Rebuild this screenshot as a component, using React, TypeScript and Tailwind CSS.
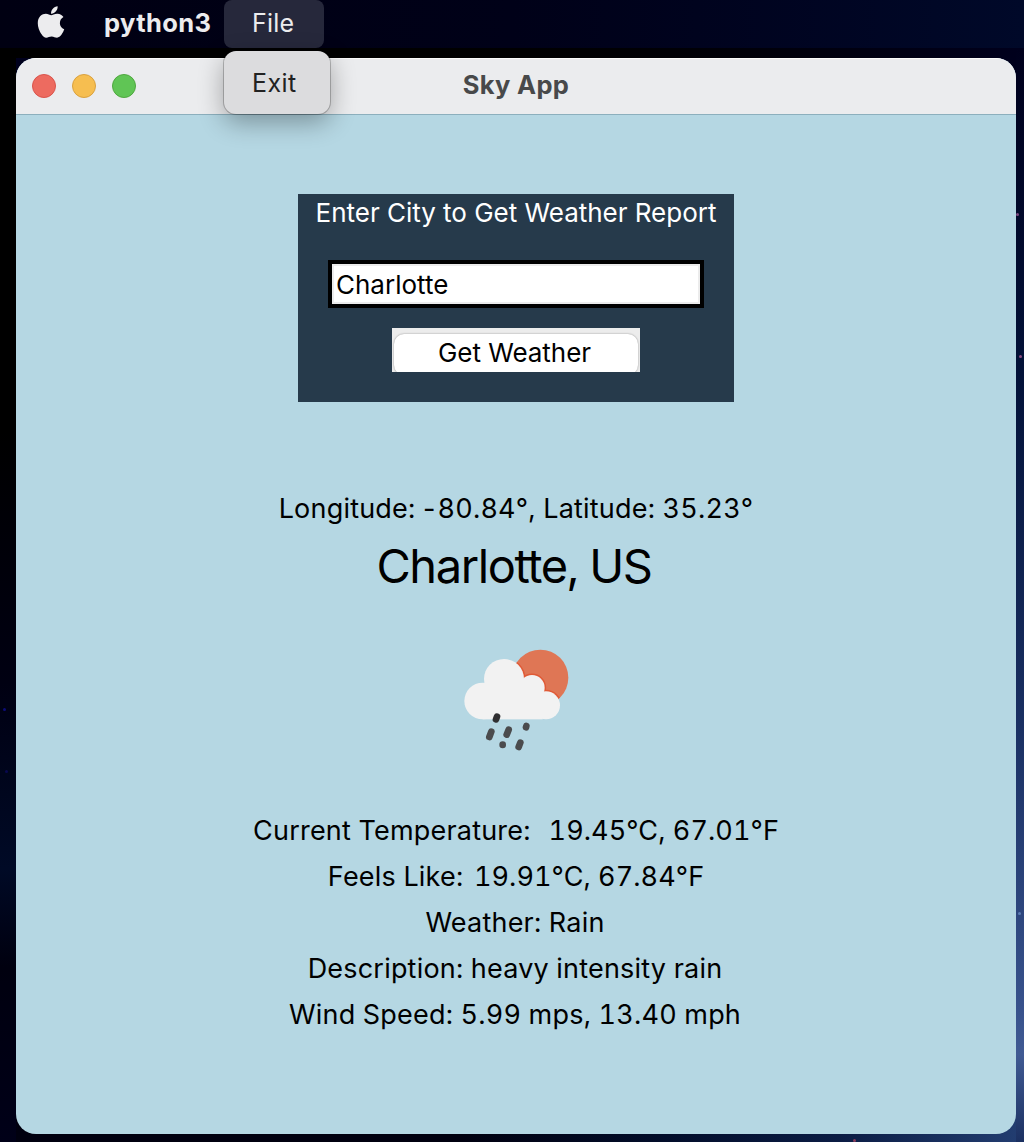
import { FaApple } from "react-icons/fa";

function MenuBar() {
  return (
    <header className="flex h-12 items-center bg-linear-to-r from-[#000012] via-[#000118] to-[#000929] text-[25px] text-[#ececee]">
      <FaApple className="-mt-1 ml-[33px] size-9" />
      <span className="ml-[35px] w-[120px] pb-px text-[25.5px] font-bold tracking-[0.4px]">python3</span>
      <div className="relative h-12 w-[100px] rounded-lg bg-[#26283b] px-7 leading-[46px] tracking-[0.2px]">
        File
        <div className="absolute top-[51px] left-0 z-10 h-[63px] w-[106px] rounded-xl bg-[#dcdcde] px-7 pt-px leading-[63px] tracking-[0.4px] text-[#222] shadow-[0_0_0_1px_rgba(0,0,0,0.22),0_8px_26px_rgba(0,0,0,0.33)]">
          Exit
        </div>
      </div>
    </header>
  );
}

function TitleBar() {
  return (
    <div className="grid h-14 grid-cols-[1fr_auto_1fr] items-center bg-[#ebecee] px-4 shadow-[inset_0_1px_0_#fafafa]">
      <div className="flex gap-4">
        <span className="size-6 rounded-full border border-[#d9544c] bg-[#ed6b60]" />
        <span className="size-6 rounded-full border border-[#d9a13f] bg-[#f6be50]" />
        <span className="size-6 rounded-full border border-[#4fa73f] bg-[#60c555]" />
      </div>
      <h1 className="pb-0.5 text-[25.5px] font-bold tracking-[0.3px] text-[#48494a]">Sky App</h1>
    </div>
  );
}

function SearchPanel() {
  return (
    <div className="flex h-[208px] w-[436px] flex-col items-center bg-[#263a4b]">
      <p className="h-[66px] text-[26px] leading-[37px] tracking-[-0.02px] text-white">
        Enter City to Get Weather Report
      </p>
      <div className="h-12 w-[376px] border-4 border-black">
        <input
          defaultValue="Charlotte"
          className="block h-10 w-full border-2 border-[#ececec] bg-white pl-0.5 text-[26px] leading-9 text-black outline-none"
        />
      </div>
      <div className="mt-5 h-11 w-[248px] overflow-hidden bg-[#ececec] px-0.5 pt-1.5">
        <button className="block h-[41px] w-full rounded-[10px] bg-white pr-[3px] pb-1 text-[26px] leading-[37px] tracking-[-0.04px] text-black shadow-[0_0_2px_rgba(0,0,0,0.4)]">
          Get Weather
        </button>
      </div>
    </div>
  );
}

function RainIcon() {
  return (
    <svg viewBox="0 0 390 360" className="h-[120px] w-[130px]">
      <defs>
        <clipPath id="sun">
          <circle cx="271" cy="113" r="84" />
        </clipPath>
        <g id="cloud">
          <circle cx="162" cy="117" r="60" />
          <circle cx="98" cy="183" r="55" />
          <circle cx="246" cy="143" r="38" />
          <circle cx="288" cy="196" r="42" />
          <rect x="98" y="140" width="180" height="98" />
        </g>
      </defs>
      <circle cx="271" cy="113" r="84" fill="#df7655" />
      <g clipPath="url(#sun)">
        <use href="#cloud" stroke="#e05a36" strokeWidth="9" strokeLinejoin="round" />
      </g>
      <use href="#cloud" fill="#f2f2f2" />
      <g stroke="#4b4b4d" strokeWidth="20" strokeLinecap="round">
        <path d="M141 230l-3 8" stroke="#2f2f31" />
        <path d="M124 275l-6 16M176 269l-6 15M229 258l-1 4M158 314v1M211 308l-5 13" />
      </g>
    </svg>
  );
}

const readings = [
  ["Current Temperature:  ", "19.45°C, 67.01°F"],
  ["Feels Like: ", "19.91°C, 67.84°F"],
];

const conditions = [
  "Weather: Rain",
  "Description: heavy intensity rain",
  "Wind Speed: 5.99 mps, 13.40 mph",
];

function Report() {
  return (
    <section className="mr-0.5 flex flex-col items-center text-[27px] tracking-[0.2px] whitespace-pre text-black tabular-nums">
      <p className="flex h-[46px] pl-0.5 leading-[46px]">
        <span>Longitude: </span>
        <span className="mr-0.5 proportional-nums">-</span>
        <span>80.84°, </span>
        <span>Latitude: 35.23°</span>
      </p>
      <h2 className="h-[68px] pr-0.5 text-[47px] leading-[67px] tracking-[-1.4px]">Charlotte, US</h2>
      <div className="mt-10 mb-12">
        <RainIcon />
      </div>
      {readings.map(([label, value]) => (
        <p key={label} className="h-[46px] pl-0.5 leading-[46px]">
          {label}
          <span className="ml-[3px] tracking-[0.08px]">{value}</span>
        </p>
      ))}
      {conditions.map((text) => (
        <p key={text} className="h-[46px] leading-[46px]">
          {text}
        </p>
      ))}
    </section>
  );
}

function Star({ className }: { className: string }) {
  return <span className={`absolute size-[3px] rounded-full blur-[0.5px] ${className}`} />;
}

export default function App() {
  return (
    <main className="relative h-[1142px] w-[1024px] overflow-hidden bg-[#00000f] font-[Inter,sans-serif]">
      <MenuBar />
      <div className="flex h-[1094px] bg-[linear-gradient(to_right,#00000f_45%,#020d2a_65%,#0b1c44_82%,#233e72)]">
        <div className="w-4 shrink-0 bg-[linear-gradient(to_bottom,#000_35%,#000012_58%,#000a26_75%,#00000f_84%,#000018)]" />
        <div className="w-[1000px] shrink-0">
          <div className="h-2.5 bg-linear-to-r from-black from-30% to-[#00001c]" />
          <div className="h-[1076px] bg-[linear-gradient(to_right,#00000f_50%,transparent_50%)]">
            <div className="h-full bg-[linear-gradient(to_bottom,#00001c_50%,transparent_50%)]">
              <div className="h-full overflow-hidden rounded-[20px] bg-[#b5d7e3]">
                <TitleBar />
                <div className="flex h-[1020px] flex-col items-center border-t border-[#8cafbd] pt-[79px]">
                  <SearchPanel />
                  <div className="mt-21">
                    <Report />
                  </div>
                </div>
              </div>
            </div>
          </div>
        </div>
        <div className="w-2 shrink-0 bg-[linear-gradient(to_bottom,#00001c,#031239_30%,#1a3063_62%,#38528c_88%,#405a93_92%,#1b3061)]" />
      </div>
      <Star className="top-[213px] left-[1016px] bg-[#7d4a80]" />
      <Star className="top-[355px] left-[1019px] bg-[#8a4c80]" />
      <Star className="top-[912px] left-[1018px] bg-[#5d7db5]" />
      <Star className="top-[708px] left-[3px] bg-[#0c0c78]" />
      <Star className="top-[770px] left-[5px] bg-[#080850]" />
      <Star className="top-[1139px] left-[853px] bg-[#8a3c5a]" />
    </main>
  );
}
